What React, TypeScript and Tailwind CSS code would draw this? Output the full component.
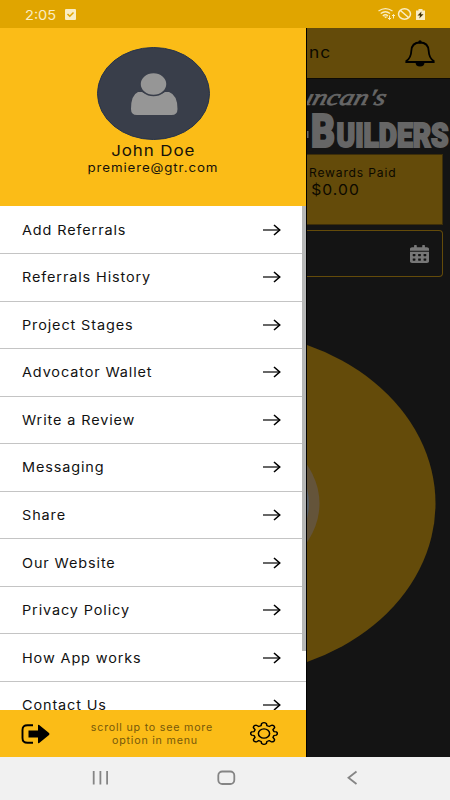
import { FaCalendarAlt } from 'react-icons/fa';

const MENU_ITEMS = [
  'Add Referrals',
  'Referrals History',
  'Project Stages',
  'Advocator Wallet',
  'Write a Review',
  'Messaging',
  'Share',
  'Our Website',
  'Privacy Policy',
  'How App works',
  'Contact Us',
];

function StatusBar() {
  return (
    <div className="h-7 shrink-0 bg-[#e0a500] flex items-center justify-between pl-[25px] pr-[24px] text-[#faedc4]">
      <div className="flex items-center">
        <span className="w-[40px] text-[13.5px] leading-4 pt-px">
          <span className="inline-block origin-left scale-x-[1.08]">2:05</span>
        </span>
        <svg className="w-[11px] h-[11px]" viewBox="0 0 11 11">
          <rect width="11" height="11" rx="1" fill="#faedc4" />
          <path d="M2.5 5 4.8 7.2 8.5 3.5" fill="none" stroke="#e0a500" strokeWidth="1.5" />
        </svg>
      </div>
      <svg className="w-[48px] h-[14px]" viewBox="0 0 48 14" fill="none" stroke="currentColor">
        <path d="M.5 4Q7.5-.9 14.5 4M2.7 6.500Q7.500 3 12 6.500M4.800 8.900Q7.500 6.600 10 8.900" strokeWidth="1.3" />
        <path d="m5.800 9.500 1.900 1.800 1.800-1.800Z" fill="currentColor" stroke="none" />
        <path d="M11.500 8.500v4M9.800 10.800l1.700 1.700 1.700-1.700M15.500 11.500v-4M14 9l1.500-1.500L17 9" strokeWidth="1" />
        <ellipse cx="26.5" cy="7" rx="6" ry="5.200" strokeWidth="1.5" />
        <path d="m22.5 3.5 8 7" strokeWidth="1.5" />
        <path d="M40.5 2h4v1.5H47V13h-9V3.5h2.5Z" fill="currentColor" stroke="none" />
        <path d="m43.500 4.500-4 4h2.500l-.7 3 4.200-4.200H43Z" fill="#403000" stroke="none" />
      </svg>
    </div>
  );
}

function Profile() {
  return (
    <div className="h-[178px] shrink-0 bg-[#fbbc17] flex flex-col items-center pt-[19px] text-[#16120a]">
      <svg className="w-[113px] h-[93px] shrink-0" viewBox="0 0 113 93">
        <ellipse cx="56.5" cy="46.5" rx="56" ry="46" fill="#393e4a" stroke="#26334a" strokeWidth="1" />
        <path
          d="M41 45h4q4 3 11.500 3T68 45h4q8.500 3 8.500 17 0 6-6 6H40q-6 0-6-6Q34 48 41 45Z"
          fill="#969696"
        />
        <ellipse cx="56.5" cy="37" rx="13.500" ry="11.500" fill="#969696" stroke="#393e4a" strokeWidth="1.500" />
      </svg>
      <div className="h-[18px] mt-[2px] text-[15px] leading-[18px] tracking-[0.8px] scale-x-[1.13]">John Doe</div>
      <div className="text-[12px] leading-4 tracking-[0.8px] scale-x-[1.11]">premiere@gtr.com</div>
    </div>
  );
}

function MenuRow({ label }: { label: string }) {
  return (
    <div className="h-[47.55px] shrink-0 border-b border-[#c4c4c4] flex items-center justify-between pl-[21.5px] pr-[25px]">
      <span className="text-[13px] leading-5 tracking-[0.8px] origin-left scale-x-[1.11]">{label}</span>
      <svg className="w-[18px] h-[12px]" viewBox="0 0 18 12" fill="none" stroke="#000">
        <path d="M0 6h17" strokeWidth="1.200" />
        <path d="m11 1 5.700 5L11 11" strokeWidth="1.600" />
      </svg>
    </div>
  );
}

function DrawerFooter() {
  return (
    <div className="h-[47px] shrink-0 bg-[#fbbc17] flex items-center justify-between pl-[21px] pr-[28px]">
      <svg className="w-[29px] h-[20px]" viewBox="0 0 29 20">
        <path d="M12 1.200H6.500Q1.500 1.200 1.500 6v8q0 4.800 5 4.800H12" fill="none" stroke="#000" strokeWidth="1.900" />
        <path d="M7.500 6.500H17V1.500q0-1.300 1.200-.4L28 9q1 1 0 2l-9.800 7.900q-1.200.9-1.200-.4v-5H7.500Z" />
      </svg>
      <div className="pl-[4px] text-center text-[10.5px] leading-[13px] tracking-[0.75px] text-[#76580b] scale-x-[1.02]">
        scroll up to see more
        <div className="pl-[6px]">option in menu</div>
      </div>
      <svg className="w-[28px] h-[23px]" viewBox="0 0 24 24" preserveAspectRatio="none" fill="none" stroke="#000" strokeWidth="1.300">
        <circle cx="12" cy="12" r="4.800" />
        <path
          strokeLinejoin="round"
          d="M10 1.500Q12 0 14 1.500l.5 2.300 2 .9 2-1.300q2.400-.2 2.600 2.400L19.700 8l.8 2 2.200.4q1.500 1.600 0 3.200l-2.200.5-.8 2 1.300 2q.2 2.600-2.500 2.700l-2-1.400-2 .9-.5 2.200q-2 1.500-4 0l-.5-2.200-2-.9-2 1.400q-2.700-.1-2.500-2.700l1.300-2-.8-2-2.200-.5q-1.500-1.600 0-3.200L3.500 10l.8-2-1.400-2.200q.2-2.600 2.600-2.400l2 1.300 2-.9Z"
        />
      </svg>
    </div>
  );
}

function Drawer() {
  return (
    <div className="relative w-[306px] shrink-0 flex flex-col bg-white">
      <Profile />
      <div className="flex-1 min-h-0 overflow-hidden flex flex-col pt-[0.45px] text-[#111]">
        {MENU_ITEMS.map((label) => (
          <MenuRow key={label} label={label} />
        ))}
      </div>
      <DrawerFooter />
      <div className="absolute right-0 top-[178px] w-[4px] h-[445px] bg-[#b7b8b7]" />
    </div>
  );
}

function Dashboard() {
  return (
    <div className="flex-1 min-w-0 overflow-hidden bg-[#141414] border-l border-black flex flex-col text-[#0c0900]">
      <div className="h-[51px] shrink-0 bg-[#644b0a] border-b border-[#0c0a05] flex items-center justify-between pl-[2px] pr-[15px]">
        <span className="text-[15.5px] tracking-[0.8px] origin-left scale-x-[1.12]">nc</span>
        <svg className="w-[30px] h-[27px]" viewBox="0 0 30 27" fill="none" stroke="#000" strokeWidth="1.800">
          <path d="M15 2.500C8.500 2.500 6.500 6.500 6.300 11c-.2 5.500-2 8-5 10v1h27.400v-1c-3-2-4.800-4.500-5-10C23.500 6.500 21.500 2.500 15 2.500Z" />
          <circle cx="15" cy="2" r="1.700" fill="#000" stroke="none" />
          <path d="M10.500 22q0 4.500 4.500 4.500t4.500-4.500Z" fill="#000" stroke="none" />
        </svg>
      </div>

      <svg className="w-[143px] h-[75px] shrink-0" viewBox="307 79 143 75" fill="#666" stroke="#666">
        <text transform="translate(297 104.500) skewX(-16)" fontFamily="Liberation Serif" fontStyle="italic" fontSize="23" textLength="87" lengthAdjust="spacingAndGlyphs" strokeWidth="0.700">
          uncan's
        </text>
        <rect x="300" y="131" width="8.500" height="7" stroke="none" />
        <text x="311" y="147" fontFamily="Roboto" fontWeight="900" fontSize="46.5" textLength="24" lengthAdjust="spacingAndGlyphs" strokeWidth="2.200">
          B
        </text>
        <text x="336.5" y="147" fontFamily="Roboto" fontWeight="900" fontSize="32.5" textLength="112" lengthAdjust="spacingAndGlyphs" strokeWidth="2">
          UILDERS
        </text>
      </svg>

      <div className="h-[71px] mr-[7px] shrink-0 bg-[#644b0a] border border-l-0 border-[#3d2e09] pt-[10px] pl-[2px]">
        <div className="text-[11.5px] leading-4 tracking-[0.8px] origin-left scale-x-[1.05] whitespace-nowrap">Rewards Paid</div>
        <div className="pl-[2px] text-[14.5px] leading-[18px] tracking-[1px] origin-left scale-x-[1.08]">$0.00</div>
      </div>

      <div className="h-[47px] mt-[5px] mr-[7px] shrink-0 border border-l-0 border-[#644b0a] rounded-r flex items-center justify-end pr-[13px]">
        <FaCalendarAlt className="w-[19px] h-[18px] text-[#777]" preserveAspectRatio="none" />
      </div>

      <svg className="w-[143px] flex-1" viewBox="307 277 143 480">
        <ellipse cx="225" cy="503.5" rx="210.5" ry="172" fill="#644b0a" />
        <ellipse cx="225" cy="503.5" rx="94.5" ry="78" fill="#64543a" />
        <ellipse cx="225" cy="503.5" rx="84" ry="69" fill="#596066" />
      </svg>
    </div>
  );
}

function NavBar() {
  return (
    <div className="h-[43px] shrink-0 bg-[#f1f1f1]">
      <svg className="w-full h-full" viewBox="0 0 450 43" fill="none" stroke="#858585" strokeWidth="1.800">
        <path d="M93.700 14v13.500M100.400 14v13.500M107.100 14v13.500" />
        <rect x="218.300" y="14.500" width="16" height="12.500" rx="4" />
        <path d="m356.500 14.500-8 6.200 8 6.300" />
      </svg>
    </div>
  );
}

export default function App() {
  return (
    <div className="w-[450px] h-[800px] overflow-hidden flex flex-col font-['Inter',sans-serif]">
      <StatusBar />
      <div className="flex-1 min-h-0 flex">
        <Drawer />
        <Dashboard />
      </div>
      <NavBar />
    </div>
  );
}
